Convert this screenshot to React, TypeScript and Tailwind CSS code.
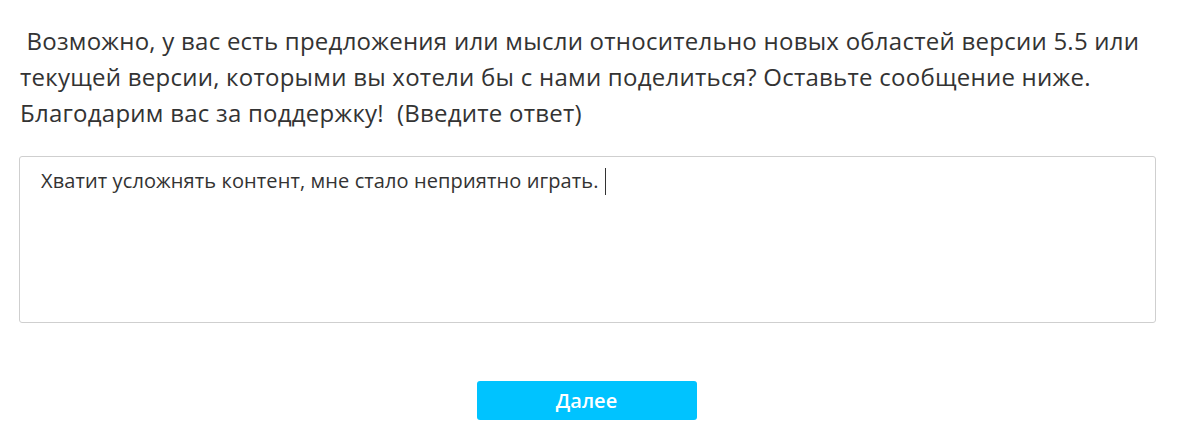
export default function App() {
  return (
    <div className="w-[1181px] h-[436px] bg-white text-[#333333]" style={{ fontFamily: '"Open Sans", "Noto Sans", sans-serif' }}>
      <div className="pl-[20px] pr-[26px] pt-[23px]">
        <p className="text-[24px] leading-[36px] tracking-[0.25px] whitespace-nowrap">
          &nbsp;Возможно, у вас есть предложения или мысли относительно новых областей версии 5.5 или<br />
          текущей версии, которыми вы хотели бы с нами поделиться? Оставьте сообщение ниже.<br />
          Благодарим вас за поддержку!&nbsp; (Введите ответ)
        </p>
        <div className="mt-[25px] -ml-px w-[1137px] h-[167px] border border-[#cfcfcf] rounded-[3px] pl-[21px] pt-[10px]">
          <div className="flex items-center h-[28px]">
            <span className="text-[20px] leading-[28px] tracking-[0.1px]">Хватит усложнять контент, мне стало неприятно играть.</span>
            <span className="inline-block w-[1.5px] h-[27px] bg-[#333] ml-[6px]"></span>
          </div>
        </div>
        <div className="flex justify-center mt-[58px] pr-[2px]">
          <button className="w-[220px] h-[39px] rounded-[3px] bg-[#00c3ff] text-white text-[20px] font-semibold">Далее</button>
        </div>
      </div>
    </div>
  );
}
